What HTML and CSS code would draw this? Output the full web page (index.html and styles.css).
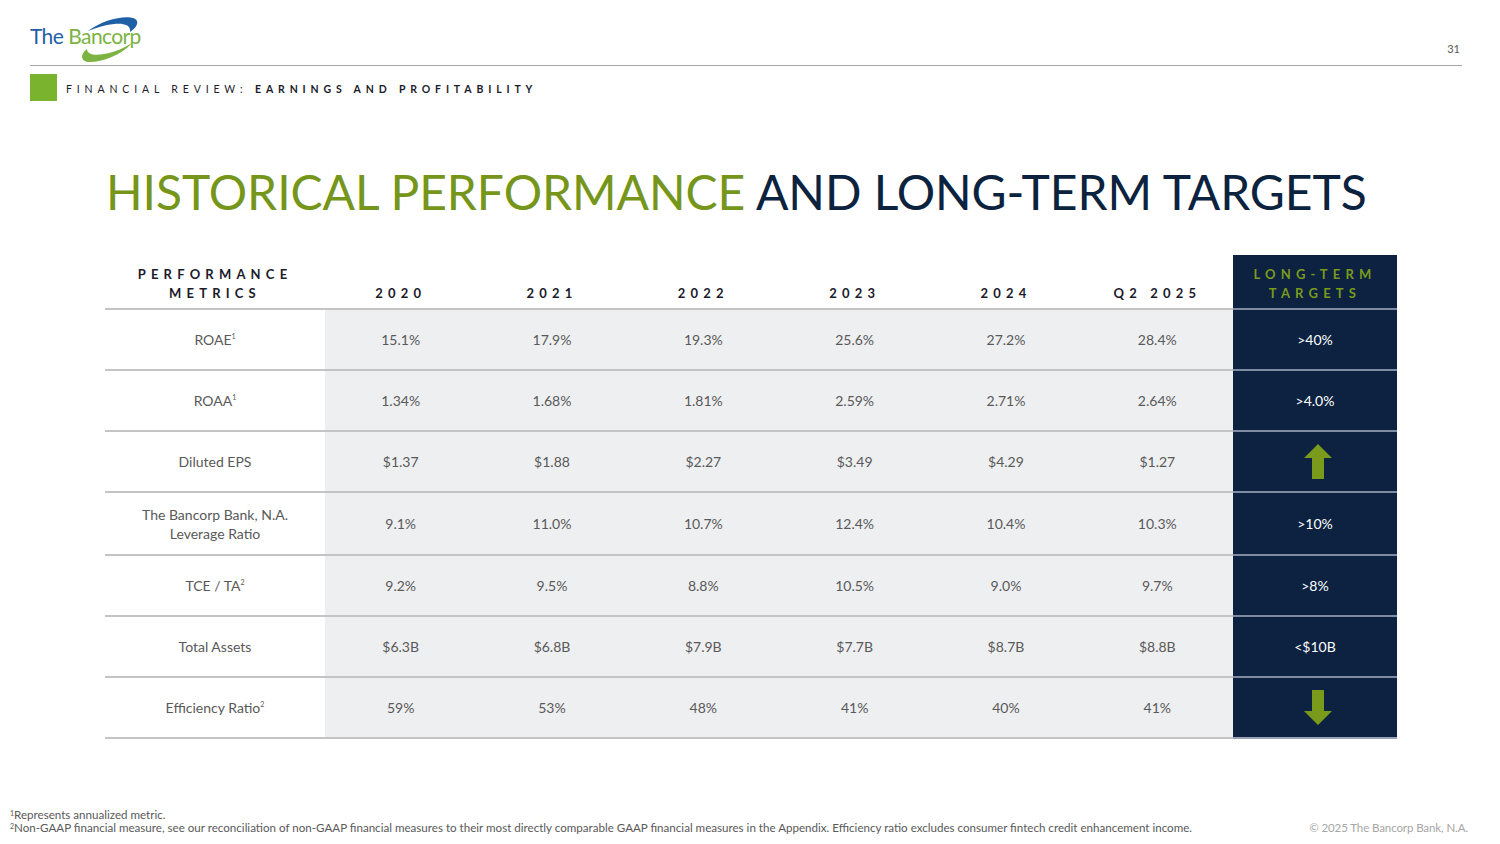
FILE: index.html
```html
<!DOCTYPE html>
<html lang="en">
<head>
<meta charset="utf-8">
<title>Historical Performance and Long-Term Targets</title>
<link rel="stylesheet" href="styles.css">
</head>
<body>
<div class="slide">
  <header class="topbar">
    <div class="logo">
      <span class="logo-the">The</span><span class="logo-bancorp">Bancorp</span>
      <svg class="logo-swoosh" width="90" height="46" viewBox="0 0 90 46" aria-hidden="true">
        <path d="M28 15 C42 4 64 -1 73 2 C80 4 78 11 70 16 C71 9 64 7 54 8 C44 9 36 12 28 15 Z" fill="#1f5fa6"/>
        <path d="M72 27 C62 39 42 46 30 46 C20 46 20 38 27 33 C27 38 34 40 44 38 C55 36 64 32 72 27 Z" fill="#7cb342"/>
      </svg>
    </div>
    <div class="pagenum">31</div>
  </header>
  <div class="section">
    <span class="square"></span>
    <span class="section-text">FINANCIAL REVIEW: <b>EARNINGS AND PROFITABILITY</b></span>
  </div>
  <h1 class="title"><span class="green">HISTORICAL PERFORMANCE</span> AND LONG-TERM TARGETS</h1>
  <table class="metrics">
    <colgroup>
      <col class="c-metric"><col class="c-year"><col class="c-year"><col class="c-year"><col class="c-year"><col class="c-year"><col class="c-year"><col class="c-target">
    </colgroup>
    <thead>
      <tr>
        <th>PERFORMANCE<br>METRICS</th>
        <th>2020</th><th>2021</th><th>2022</th><th>2023</th><th>2024</th><th>Q2 2025</th>
        <th class="target">LONG-TERM<br>TARGETS</th>
      </tr>
    </thead>
    <tbody>
      <tr><td class="metric">ROAE<sup>1</sup></td><td>15.1%</td><td>17.9%</td><td>19.3%</td><td>25.6%</td><td>27.2%</td><td>28.4%</td><td class="target">&gt;40%</td></tr>
      <tr><td class="metric">ROAA<sup>1</sup></td><td>1.34%</td><td>1.68%</td><td>1.81%</td><td>2.59%</td><td>2.71%</td><td>2.64%</td><td class="target">&gt;4.0%</td></tr>
      <tr><td class="metric">Diluted EPS</td><td>$1.37</td><td>$1.88</td><td>$2.27</td><td>$3.49</td><td>$4.29</td><td>$1.27</td><td class="target">
        <svg class="arrow" width="28" height="35" viewBox="0 0 28 35" aria-hidden="true"><path d="M14 0 L28 14 L20 14 L20 35 L8 35 L8 14 L0 14 Z" fill="#7a9a1c"/></svg></td></tr>
      <tr class="tall"><td class="metric">The Bancorp Bank, N.A.<br>Leverage Ratio</td><td>9.1%</td><td>11.0%</td><td>10.7%</td><td>12.4%</td><td>10.4%</td><td>10.3%</td><td class="target">&gt;10%</td></tr>
      <tr><td class="metric">TCE / TA<sup>2</sup></td><td>9.2%</td><td>9.5%</td><td>8.8%</td><td>10.5%</td><td>9.0%</td><td>9.7%</td><td class="target">&gt;8%</td></tr>
      <tr><td class="metric">Total Assets</td><td>$6.3B</td><td>$6.8B</td><td>$7.9B</td><td>$7.7B</td><td>$8.7B</td><td>$8.8B</td><td class="target">&lt;$10B</td></tr>
      <tr><td class="metric">Efficiency Ratio<sup>2</sup></td><td>59%</td><td>53%</td><td>48%</td><td>41%</td><td>40%</td><td>41%</td><td class="target">
        <svg class="arrow" width="28" height="35" viewBox="0 0 28 35" aria-hidden="true"><path d="M8 0 L20 0 L20 21 L28 21 L14 35 L0 21 L8 21 Z" fill="#7a9a1c"/></svg></td></tr>
    </tbody>
  </table>
  <footer class="foot">
    <div class="notes">
      <p><sup>1</sup>Represents annualized metric.</p>
      <p><sup>2</sup>Non-GAAP financial measure, see our reconciliation of non-GAAP financial measures to their most directly comparable GAAP financial measures in the Appendix. Efficiency ratio excludes consumer fintech credit enhancement income.</p>
    </div>
    <div class="copy">© 2025 The Bancorp Bank, N.A.</div>
  </footer>
</div>
</body>
</html>
```

FILE: styles.css
```css
* { box-sizing: border-box; }
html, body { margin: 0; padding: 0; background: #ffffff; }
body { font-family: Lato, "Open Sans", "Liberation Sans", sans-serif; color: #595959; }

.slide {
  width: 1500px;
  height: 844px;
  display: flex;
  flex-direction: column;
  overflow: hidden;
}

/* top bar */
.topbar {
  height: 66px;
  margin: 0 38px 0 30px;
  border-bottom: 1px solid #a6a6a6;
  display: flex;
  justify-content: space-between;
  align-items: flex-start;
}
.logo {
  position: relative;
  margin-top: 24px;
  font-size: 21px;
  letter-spacing: -0.6px;
  line-height: 24px;
  height: 34px;
  width: 116px;
}
.logo-the { color: #1f5fa6; }
.logo-bancorp { color: #7cb342; margin-left: 5px; }
.logo-swoosh { position: absolute; left: 30px; top: -8px; }
.pagenum {
  margin-top: 42px;
  font-size: 11px;
  color: #595959;
  margin-right: 2px;
}

/* section label */
.section {
  margin: 8px 0 0 30px;
  height: 27px;
  display: flex;
  align-items: center;
  gap: 9px;
}
.square { width: 27px; height: 27px; background: #7ab32e; }
.section-text {
  font-size: 10.5px;
  letter-spacing: 4.85px;
  color: #1b1b2b;
  margin-top: 2px;
}
.section-text b { font-weight: 700; }

/* title */
.title {
  margin: 63px 0 0 106px;
  font-weight: 400;
  font-size: 48px;
  line-height: 56px;
  letter-spacing: -0.05px;
  color: #0c2340;
  white-space: nowrap;
}
.title .green { color: #76961b; }

/* table */
.metrics {
  margin: 35px 0 0 105px;
  width: 1292px;
  border-collapse: collapse;
  table-layout: fixed;
}
.c-metric { width: 220px; }
.c-year { width: 151.33px; }
.c-target { width: 164px; }

.metrics th {
  height: 54px;
  vertical-align: bottom;
  padding: 0 0 5px;
  font-size: 13px;
  font-weight: 700;
  letter-spacing: 5.2px;
  line-height: 19px;
  color: #1b1b2b;
  text-align: center;
  border-bottom: 2px solid #c4c4c4;
}
.metrics th.target {
  background: #0c2240;
  color: #7a9a1c;
  border-bottom: 2px solid #7d8ca3;
}

.metrics td {
  height: 61px;
  text-align: center;
  vertical-align: middle;
  font-size: 14px;
  color: #595959;
  background: #eeeff1;
  border-bottom: 2px solid #c4c4c4;
  padding: 0;
  line-height: 19px;
}
.metrics tr.tall td { height: 63px; }
.metrics td.metric { background: #ffffff; }
.metrics td.target {
  background: #0c2240;
  color: #ffffff;
  border-bottom: 2px solid #7d8ca3;
}
.metrics tbody tr:last-child td.target { border-bottom-color: #9aa3b3; }
.metrics sup { font-size: 7px; vertical-align: 6px; line-height: 0; }
.arrow { display: block; margin: 0 auto; position: relative; left: 3px; }

/* footer */
.foot {
  margin-top: auto;
  padding: 0 32px 10px 10px;
  display: flex;
  justify-content: space-between;
  align-items: flex-end;
}
.notes p {
  margin: 0;
  font-size: 11.6px;
  line-height: 13px;
  letter-spacing: 0;
  color: #595959;
}
.notes sup { font-size: 7px; vertical-align: 3px; line-height: 0; }
.copy {
  font-size: 11.5px;
  color: #a6a6a6;
  line-height: 13px;
  letter-spacing: -0.1px;
}
```
